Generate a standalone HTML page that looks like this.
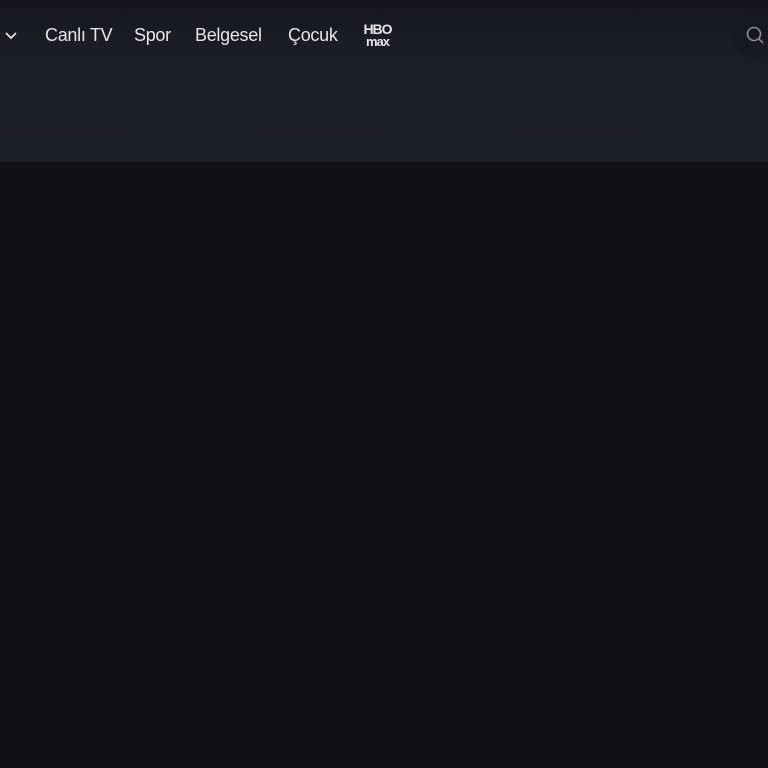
<!DOCTYPE html>
<html><head><meta charset="utf-8"><style>
html,body{margin:0;padding:0;width:768px;height:768px;background:#0f1014;overflow:hidden;font-family:"Liberation Sans",sans-serif}
.hdr{position:absolute;left:0;top:0;width:768px;height:162px;background:linear-gradient(#14161c 0px,#1a1d25 40px,#1d2029 162px)}
.nav{position:absolute;top:25px;color:#e6e6e8;font-size:18px;letter-spacing:-0.3px}
.srch{position:absolute;left:733px;top:13px;width:46px;height:46px;border-radius:50%;background:#171920}
</style></head><body>
<div class="hdr"></div>
<svg style="position:absolute;left:4px;top:30px" width="14" height="10"><path d="M2 3 L7 8 L12 3" stroke="#e6e6e8" stroke-width="1.8" fill="none"/></svg>
<div class="nav" style="left:45px">Canlı TV</div>
<div class="nav" style="left:134px">Spor</div>
<div class="nav" style="left:195px">Belgesel</div>
<div class="nav" style="left:288px">Çocuk</div>
<div style="position:absolute;left:361px;top:23px;color:#e6e6e8;font-weight:900;font-size:14px;line-height:12px;letter-spacing:-1px;text-align:center;width:33px">HBO<br><span style="font-size:13px">max</span></div>
<div class="srch"></div>
<svg style="position:absolute;left:745px;top:25px" width="22" height="22"><circle cx="9" cy="9" r="6.5" stroke="#8a8c92" stroke-width="1.6" fill="none"/><path d="M14 14 L18 18" stroke="#8a8c92" stroke-width="1.6"/></svg>
</body></html>
